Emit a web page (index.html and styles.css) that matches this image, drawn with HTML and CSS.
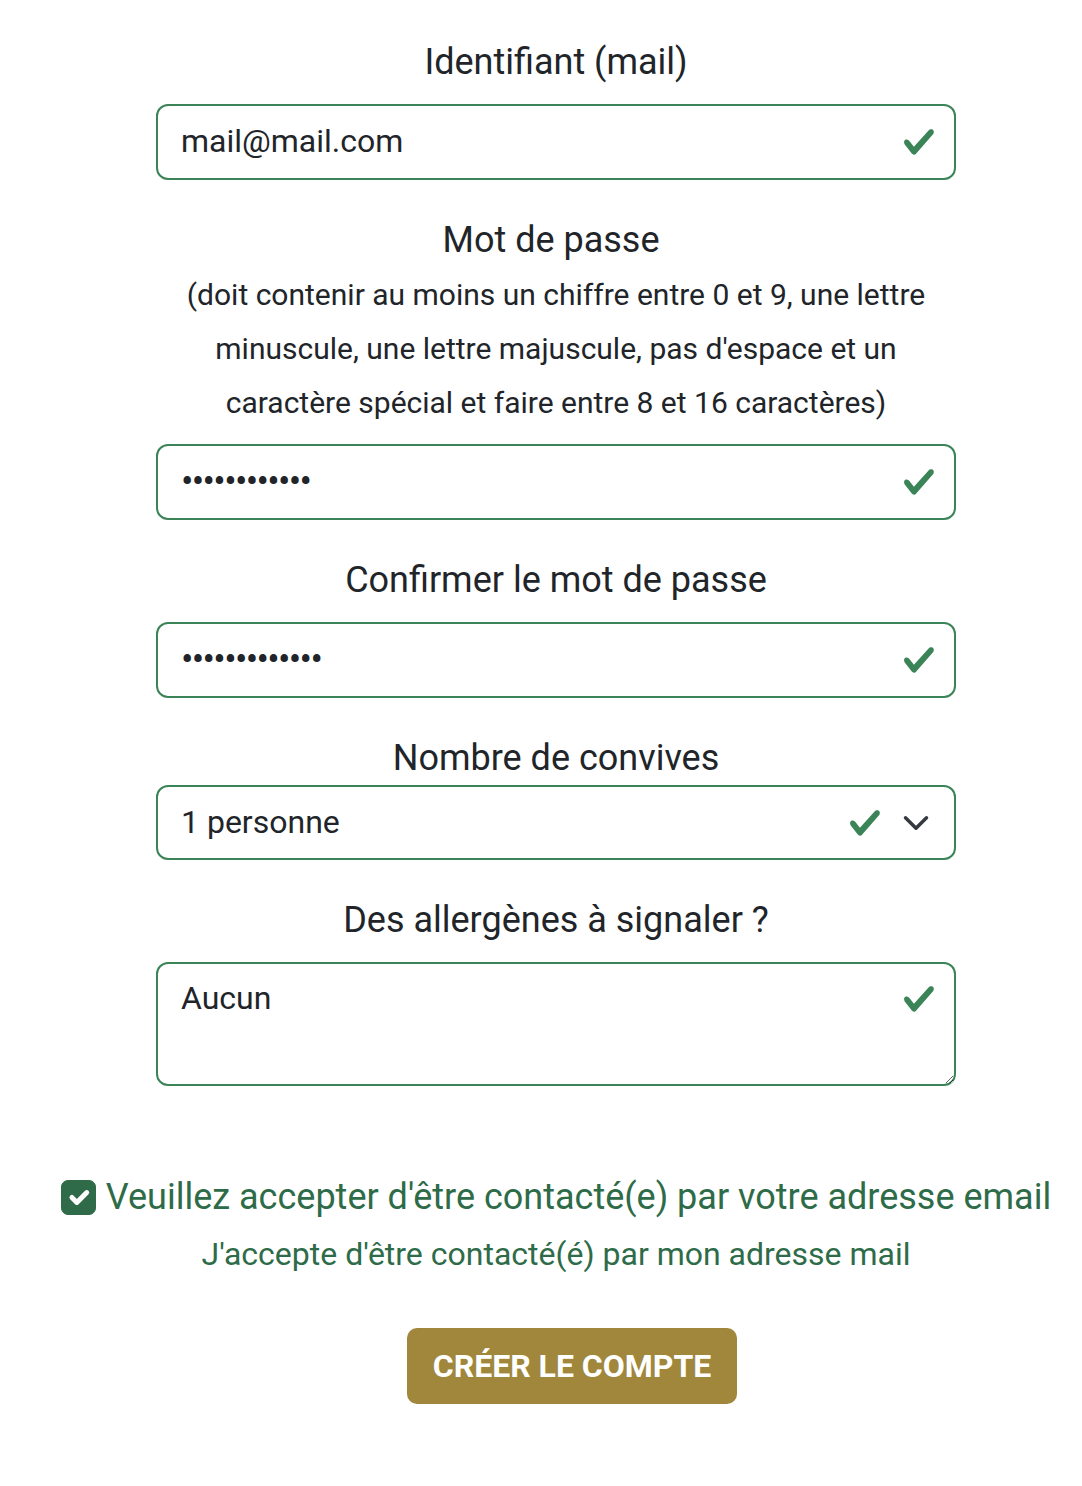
FILE: index.html
```html
<!DOCTYPE html>
<html lang="fr">
<head>
<meta charset="utf-8">
<title>Créer un compte</title>
<link rel="stylesheet" href="styles.css">
</head>
<body>
<main class="page">
  <form class="form">
    <div class="group">
      <label class="label" for="mail">Identifiant (mail)</label>
      <div class="field">
        <input class="control" id="mail" type="email" value="mail@mail.com">
        <svg class="valid" viewBox="0 0 8 8"><path d="M2.3 6.73.6 4.53c-.4-1.04.46-1.4 1.1-.8l1.1 1.4 3.4-3.8c.6-.63 1.6-.27 1.2.7l-4 4.6c-.43.5-.8.4-1.1.1z"/></svg>
      </div>
    </div>

    <div class="group">
      <label class="label label-shift" for="pwd">Mot de passe</label>
      <p class="hint">(doit contenir au moins un chiffre entre 0 et 9, une lettre minuscule, une lettre majuscule, pas d'espace et un caractère spécial et faire entre 8 et 16 caractères)</p>
      <div class="field">
        <input class="control pass" id="pwd" type="password" value="aaaaaaaaaaaa">
        <svg class="valid" viewBox="0 0 8 8"><path d="M2.3 6.73.6 4.53c-.4-1.04.46-1.4 1.1-.8l1.1 1.4 3.4-3.8c.6-.63 1.6-.27 1.2.7l-4 4.6c-.43.5-.8.4-1.1.1z"/></svg>
      </div>
    </div>

    <div class="group">
      <label class="label" for="pwd2">Confirmer le mot de passe</label>
      <div class="field">
        <input class="control pass" id="pwd2" type="password" value="aaaaaaaaaaaaa">
        <svg class="valid" viewBox="0 0 8 8"><path d="M2.3 6.73.6 4.53c-.4-1.04.46-1.4 1.1-.8l1.1 1.4 3.4-3.8c.6-.63 1.6-.27 1.2.7l-4 4.6c-.43.5-.8.4-1.1.1z"/></svg>
      </div>
    </div>

    <div class="group">
      <label class="label label-tight" for="guests">Nombre de convives</label>
      <div class="field">
        <div class="control select" id="guests">1 personne</div>
        <svg class="valid valid-select" viewBox="0 0 8 8"><path d="M2.3 6.73.6 4.53c-.4-1.04.46-1.4 1.1-.8l1.1 1.4 3.4-3.8c.6-.63 1.6-.27 1.2.7l-4 4.6c-.43.5-.8.4-1.1.1z"/></svg>
        <svg class="chevron" viewBox="0 0 16 16"><path d="m2 5 6 6 6-6" fill="none" stroke="#343a40" stroke-width="2" stroke-linecap="round" stroke-linejoin="round"/></svg>
      </div>
    </div>

    <div class="group">
      <label class="label" for="allerg">Des allergènes à signaler ?</label>
      <div class="field">
        <textarea class="control area" id="allerg">Aucun</textarea>
        <svg class="valid valid-top" viewBox="0 0 8 8"><path d="M2.3 6.73.6 4.53c-.4-1.04.46-1.4 1.1-.8l1.1 1.4 3.4-3.8c.6-.63 1.6-.27 1.2.7l-4 4.6c-.43.5-.8.4-1.1.1z"/></svg>
      </div>
    </div>

    <div class="consent">
      <div class="check-row">
        <span class="checkbox"><svg viewBox="0 0 20 20"><path d="m6 10 3 3 6-6" fill="none" stroke="#fff" stroke-width="3" stroke-linecap="round" stroke-linejoin="round"/></svg></span>
        <span class="check-label">Veuillez accepter d'être contacté(e) par votre adresse email</span>
      </div>
      <p class="check-feedback">J'accepte d'être contacté(é) par mon adresse mail</p>
    </div>

    <div class="actions">
      <button type="button" class="btn">CRÉER LE COMPTE</button>
    </div>
  </form>
</main>
</body>
</html>
```

FILE: styles.css
```css
* { box-sizing: border-box; }

html, body {
  margin: 0;
  padding: 0;
  background: #fff;
}

body {
  font-family: Roboto, "Liberation Sans", Arial, sans-serif;
  color: #212529;
}

.page {
  padding: 35px 0 0 30px;
}

.form {
  width: 800px;
  margin: 0 auto;
}

.group {
  display: flex;
  flex-direction: column;
  margin-bottom: 33px;
}

.label {
  display: block;
  text-align: center;
  font-size: 36px;
  line-height: 54px;
  margin-bottom: 15px;
}

.label-shift {
  padding-right: 10px;
}

.label-tight {
  margin-bottom: 0;
}

.hint {
  margin: -14px 0 14px;
  text-align: center;
  font-size: 30px;
  line-height: 54px;
  padding: 0 20px;
}

.field {
  position: relative;
}

.control {
  display: block;
  width: 100%;
  height: 76px;
  margin: 0;
  padding: 0 80px 2px 23px;
  border: 2px solid #3b8457;
  border-radius: 12px;
  background: #fff;
  font-family: Roboto, "Liberation Sans", Arial, sans-serif;
  font-size: 32px;
  color: #212529;
  outline: none;
}

.pass {
  font-size: 37px;
  letter-spacing: -1.7px;
}

.select {
  display: flex;
  align-items: center;
  height: 75px;
}

.area {
  height: 124px;
  padding: 12px 80px 13px 23px;
  line-height: 44px;
  resize: vertical;
}

.valid {
  position: absolute;
  right: 20px;
  top: 50%;
  width: 34px;
  height: 34px;
  margin-top: -17px;
  fill: #3b8457;
}

.valid-select {
  right: 74px;
}

.valid-top {
  top: 20px;
  margin-top: 0;
}

.chevron {
  position: absolute;
  right: 26px;
  top: 50%;
  width: 28px;
  height: 28px;
  margin-top: -14px;
}

.consent {
  margin-top: 84px;
  text-align: center;
}

.check-row {
  display: flex;
  justify-content: center;
  align-items: center;
  gap: 10px;
  white-space: nowrap;
}

.checkbox {
  flex: none;
  width: 35px;
  height: 35px;
  border-radius: 7px;
  background: #2f6b48;
  border: 1px solid #2f6b48;
  display: flex;
  align-items: center;
  justify-content: center;
}

.checkbox svg {
  width: 33px;
  height: 33px;
}

.check-label {
  font-size: 36px;
  line-height: 54px;
  color: #2e6b48;
}

.check-feedback {
  margin: 6px 0 0;
  font-size: 32px;
  line-height: 48px;
  color: #2e6b48;
}

.actions {
  display: flex;
  justify-content: center;
  margin-top: 50px;
  padding-left: 32px;
}

.btn {
  width: 330px;
  height: 76px;
  border: none;
  border-radius: 10px;
  background: #a0873b;
  color: #fff;
  font-family: Roboto, "Liberation Sans", Arial, sans-serif;
  font-weight: 700;
  font-size: 32px;
  letter-spacing: 0;
}
```
